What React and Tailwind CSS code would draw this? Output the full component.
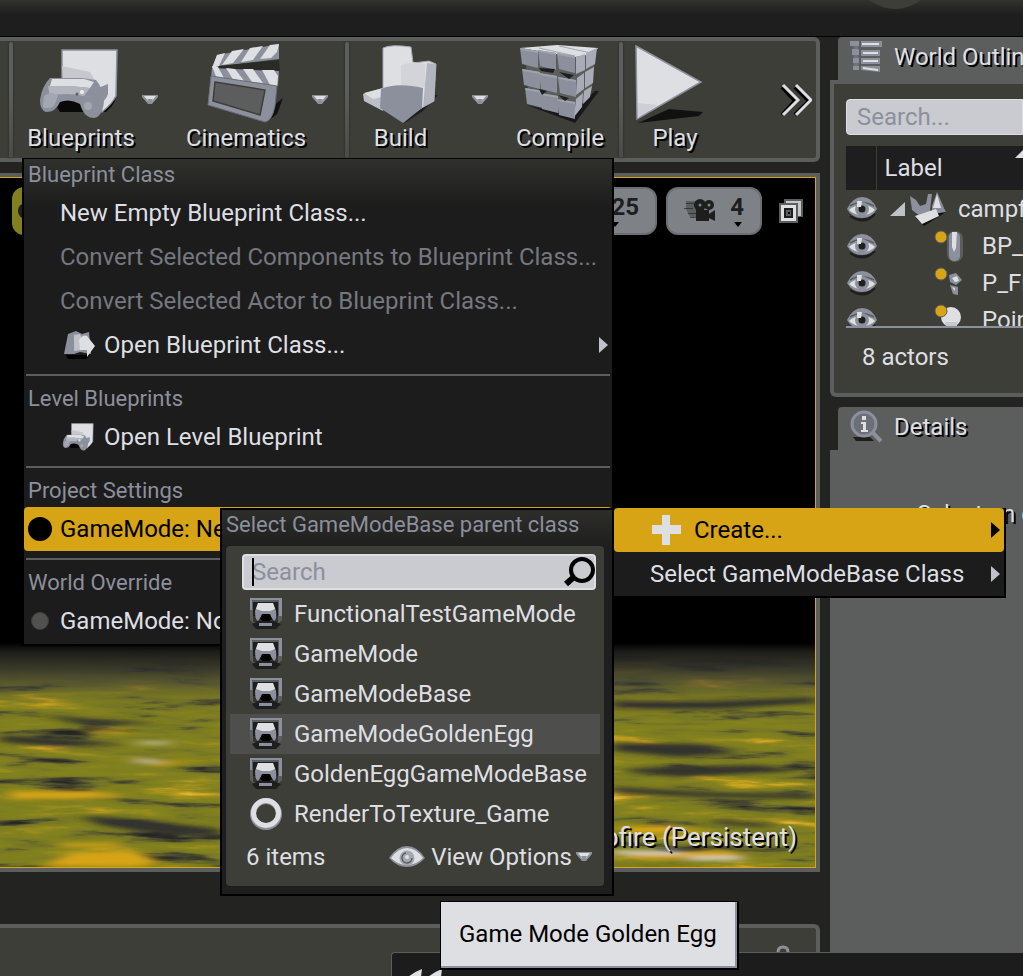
import React from "react";

const shade = "[text-shadow:2px_2px_0_#000]";

function Down({ className = "" }) {
  return (
    <svg viewBox="0 0 16 10" className={"h-[10px] w-4 shrink-0 " + className} aria-hidden="true">
      <path d="M0 0H16V2L10 9H6L0 2Z" fill="#8c909c" />
      <path d="M2 1H14L10 6H6Z" fill="#dedfe2" />
      <path d="M5 4H11L8 8Z" fill="#8c909c" />
    </svg>
  );
}

function Gamepad() {
  return (
    <g>
      <path d="M50 44L76 46Q78 56 66 66H20L14 56Z" fill="#000" opacity=".85" />
      <path d="M22 4H77L76 50Q72 58 62 66L52 54L22 40Z" fill="#dedfe2" stroke="#8c909c" strokeWidth="1.5" />
      <path d="M22 20L50 26L58 40L24 46Z" fill="#c6c8ce" />
      <path d="M58 42L68 38V48Q66 54 60 58Z" fill="#8c909c" />
      <path d="M10 32H42L56 34Q62 40 64 56Q62 71 54 72Q44 72 40 58Q30 52 20 56Q16 66 6 66Q0 64 0 54Q2 40 10 32Z" fill="#8c909c" />
      <path d="M12 33H44L54 36L50 42L30 40H10Z" fill="#dedfe2" />
      <path d="M8 40L30 40L50 42L44 50Q26 46 10 50Z" fill="#b2b5be" />
      <path d="M4 50Q12 44 18 50L14 60Q8 64 3 61Z" fill="#a4a7b1" />
      <circle cx="42" cy="46" r="2" fill="#eee" />
      <circle cx="37" cy="48" r="1.5" fill="#5c5e5d" />
      <circle cx="48" cy="60" r="4" fill="#a4a7b1" />
    </g>
  );
}

function BlueprintIcon() {
  return (
    <svg viewBox="0 0 82 78" className="h-[78px] w-[82px]" aria-hidden="true">
      <Gamepad />
    </svg>
  );
}

function CinematicsIcon() {
  return (
    <svg viewBox="0 0 78 82" className="h-[82px] w-[78px]" aria-hidden="true">
      <path d="M66 62L76 54L70 70L60 78Z" fill="#111" />
      <path d="M10 11L72 0V15L12 22L5 24Z" fill="#8c909c" />
      <path d="M12 22L72 16L73 27H12Z" fill="#2a2a26" />
      <path d="M10 11L18 9L12 22L5 24Z M25 7L37 5L26 19L15 21Z M43 4L56 2L46 16L34 18Z M63 1L72 0L70 8L64 14L53 15Z" fill="#dedfe2" />
      <path d="M5 24L72 27L71 42L4 34Z" fill="#8c909c" />
      <path d="M5 22L11 23L18 36L10 35Z M19 24L28 25L38 38L27 37Z M36 25L46 25L56 39L45 38Z M55 26L67 26L71 32L70 42L63 41Z" fill="#dedfe2" />
      <path d="M4 32L70 42L68 62Q65 77 58 78L1 61Z" fill="#8c909c" stroke="#6b6e76" />
      <path d="M8 38L58 46L53 71L6 57Z" fill="#5c5e5d" stroke="#3e3e38" strokeWidth="1.5" />
    </svg>
  );
}

function BuildIcon() {
  return (
    <svg viewBox="0 0 76 80" className="h-20 w-[76px]" aria-hidden="true">
      <path d="M60 66L75 50L70 50L40 79Z" fill="#1e1e1e" />
      <path d="M20 3Q28 -1 48 2L50 18L66 16L73 19L71 56L55 65L20 54Z" fill="#dedfe2" stroke="#a4a7b1" />
      <path d="M64 18L73 19L71 56L60 62Z" fill="#b2b5be" />
      <path d="M38 20L50 17L62 19V42H38Z" fill="#d2d4d9" />
      <path d="M0 49L20 43V66L1 56Z" fill="#bcbfc7" />
      <path d="M1 48L20 43L19 52L10 54Z" fill="#dedfe2" />
      <path d="M18 44Q34 37 60 43L59 63L40 78L17 63Z" fill="#8c909c" />
    </svg>
  );
}

function CompileIcon() {
  const cubes = [
    [1, 3, 0], [19, 5, 1], [38, 8, 2],
    [3, 24, 3], [20, 28, 4], [39, 32, 5],
    [6, 43, 6], [21, 48, 7], [38, 54, 8],
  ];
  return (
    <svg viewBox="0 0 82 80" className="h-20 w-[82px]" aria-hidden="true">
      <path d="M56 78L80 46L76 46L50 70L8 60Z" fill="#191919" />
      <path d="M6 8L77 8L72 48L52 72L10 58Z" fill="#5c5e5d" />
      <path d="M1 3L38 0L79 3L74 9L56 12Z" fill="#dedfe2" />
      <path d="M20 3L56 11M40 1L72 8" stroke="#a4a7b1" strokeWidth="1" />
      {cubes.map(([x, y, k]) => (
        <g key={k}>
          <path d={`M${x} ${y}L${x + 18} ${y + 3}L${x + 18} ${y + 20}L${x + 2} ${y + 16}Z`} fill="#8c909c" />
          <path d={`M${x} ${y}L${x + 18} ${y + 3}V${y + 5}L${x + 1} ${y + 2}Z`} fill="#a0a3ad" />
        </g>
      ))}
      <path d="M20 23L36 24L34 28L22 26Z M40 27L55 30L50 34Z M20 44L28 46L23 50Z M39 50L50 53L46 56Z" fill="#1e1e1e" />
      <path d="M57 12L66 9V25L57 29Z M67 8L78 3L76 19L67 24Z M58 33L65 28V44L57 50Z M66 27L75 22L74 38L66 43Z M57 54L64 48L63 62L55 72Z M65 46L73 41L71 52L64 59Z" fill="#a9acb6" />
    </svg>
  );
}

function PlayIcon() {
  return (
    <svg viewBox="0 0 70 80" className="h-20 w-[70px]" aria-hidden="true">
      <path d="M3 78L34 64L68 67L64 71Z" fill="#111" />
      <path d="M1 1L66 37L2 74Z" fill="#dedfe2" stroke="#8c909c" strokeWidth="1.5" />
      <path d="M3 58L22 60L3 73Z" fill="#cdcfd4" />
    </svg>
  );
}

function Eye() {
  return (
    <svg viewBox="0 0 32 26" className="h-[26px] w-8" aria-hidden="true">
      <path d="M4 20Q16 28 29 18Q18 30 4 20Z" fill="#1e1e1e" stroke="#1e1e1e" strokeWidth="2" />
      <path d="M1 13Q7 1 16 1Q26 1 31 13Q26 22 16 22Q6 22 1 13Z" fill="#8c909c" />
      <path d="M3 14Q8 9 16 9Q24 9 29 14Q24 19 16 19Q8 19 3 14Z" fill="#dedfe2" />
      <path d="M4 10Q15 3 28 10" fill="none" stroke="#5c5e5d" strokeWidth="1.5" />
      <circle cx="16" cy="13" r="7" fill="#8c909c" />
      <circle cx="16" cy="13" r="3.5" fill="#1e1e1e" />
      <path d="M11 5H16L15 11H11Z" fill="#dedfe2" />
    </svg>
  );
}

function ClassIcon() {
  return (
    <svg viewBox="0 0 32 32" className="h-8 w-8 shrink-0" aria-hidden="true">
      <path d="M0 0H32V22L29 25H3L0 22Z" fill="#5c5e5d" />
      <path d="M0 0H32V2H0Z M0 2H2V12H0Z M29 2H32V18H29Z" fill="#8c909c" />
      <path d="M3 4H28V18H3Z" fill="#1e1e1e" />
      <path d="M3 18H28V24H3Z" fill="#33332f" />
      <path d="M8 5H23L26 13Q27 22 24 23L20 17H12L8 23Q5 22 5 13Z" fill="#8c909c" />
      <path d="M8 5H23L25 11L20 13H12L6 11Z" fill="#dedfe2" />
      <path d="M10 21L12 16H20L22 21L19 23H13Z" fill="#000" />
      <path d="M2 26L8 23H24L31 26L26 31H6Z" fill="#1e1e1e" />
      <path d="M9 25H22V28H9Z" fill="#8c909c" />
    </svg>
  );
}

function Terrain() {
  return (
    <svg className="block h-56 w-full" viewBox="0 0 815 224" preserveAspectRatio="none" aria-hidden="true">
      <defs>
        <filter id="moss" x="0" y="0" width="100%" height="100%" colorInterpolationFilters="sRGB">
          <feTurbulence type="fractalNoise" baseFrequency="0.009 0.075" numOctaves="5" seed="21" />
          <feColorMatrix values="1 0 0 0 0  1 0 0 0 0  1 0 0 0 0  0 0 0 0 1" />
          <feComponentTransfer>
            <feFuncR type="table" tableValues=".12 .12 .16 .3 .46 .5 .52 .62 .85 .87 .87" />
            <feFuncG type="table" tableValues=".12 .12 .16 .3 .46 .5 .51 .56 .66 .8 .86" />
            <feFuncB type="table" tableValues=".12 .12 .15 .18 .15 .125 .125 .12 .12 .6 .86" />
          </feComponentTransfer>
        </filter>
        <filter id="soft" x="-20%" y="-80%" width="140%" height="260%">
          <feGaussianBlur stdDeviation="8 2" />
        </filter>
        <linearGradient id="depth" x1="0" y1="0" x2="0" y2="1">
          <stop offset="0" stopColor="#000" />
          <stop offset=".04" stopColor="#1a1a1a" stopOpacity=".97" />
          <stop offset=".12" stopColor="#30302c" stopOpacity=".85" />
          <stop offset=".18" stopColor="#3e3e38" stopOpacity=".6" />
          <stop offset=".24" stopColor="#3e3e38" stopOpacity=".15" />
          <stop offset=".3" stopColor="#3e3e38" stopOpacity="0" />
        </linearGradient>
      </defs>
      <rect width="815" height="224" filter="url(#moss)" />
      <rect width="815" height="224" fill="url(#depth)" />
      <g filter="url(#soft)">
        <path d="M0 92L70 96L130 102L60 104L0 99Z M80 173L120 175L220 186V194L150 190L100 182Z M40 72L160 80L90 83Z M613 100L700 101L740 110L680 114L613 108Z M640 125L760 122L800 128L680 134L620 128Z M613 144L720 150L815 151V156L700 154L613 150Z M613 58H720L815 54V60L720 66H613Z M720 176L780 182L760 184L710 180Z" fill="#30302d" />
        <path d="M10 148H90L130 153L80 156H10Z M70 210L130 207L160 218L140 224H40Z M60 200H120V204H60Z M613 184L670 182L700 188L640 192Z M613 208H730L750 216H640Z M120 114L170 119L200 118L160 123Z M90 87H130V90H90Z" fill="#d6a414" />
        <path d="M138 99H170V101H138Z M134 117H158V119H134Z M613 208H680V211H613Z M690 214H740V217H690Z" fill="#dedfe2" />
      </g>
    </svg>
  );
}

function ToolButton({ icon, label, className }) {
  return (
    <button className={"flex h-full flex-col items-center pt-1 " + className}>
      <span className="flex h-20 items-center">{icon}</span>
      <span className={"text-2xl leading-[26px] " + shade}>{label}</span>
    </button>
  );
}

function ToolDivider() {
  return <div className="h-[116px] w-1 shrink-0 rounded-full bg-gradient-to-b from-[#5c5e5d] from-40% to-[#4a4b47] shadow-[0_0_2px_#1e1e1e]" />;
}

function MenuHeading({ children }) {
  return <div className="h-8 px-1 text-[22px] leading-8 text-[#8c909c]">{children}</div>;
}

function Divider() {
  return <div role="separator" className="mx-0.5 my-[7px] h-0.5 bg-[#5c5e5d]" />;
}

function MenuItem({ icon, children, disabled, active, dot }) {
  return (
    <button
      role="menuitem"
      disabled={disabled}
      className={
        "flex h-11 w-full items-center whitespace-nowrap text-left text-2xl " +
        (active ? "rounded bg-[#d6a414] text-black " : disabled ? "text-[#75787f] " : "text-[#dedfe2] ") +
        (dot ? "gap-2 pl-1" : icon ? "gap-2 pl-[38px]" : "pl-9")
      }
    >
      {icon}
      {children}
    </button>
  );
}

function Arrow({ className }) {
  return (
    <svg viewBox="0 0 9 16" className={"h-4 w-[9px] shrink-0 " + className} aria-hidden="true">
      <path d="M0 0L9 8L0 16Z" fill="currentColor" />
    </svg>
  );
}

function ActorIcon({ kind }) {
  return (
    <svg viewBox="0 0 32 32" className="h-8 w-8" aria-hidden="true">
      {kind === "bp" && (
        <g>
          <rect x="13" y="1" width="16" height="31" rx="8" fill="#5c5e5d" />
          <rect x="15" y="2" width="11" height="29" rx="5" fill="#8c909c" />
          <path d="M18 2H23L22 18L20 22L18 17Z" fill="#dedfe2" />
        </g>
      )}
      {kind === "fx" && (
        <g fill="#8c909c">
          <path d="M15 8L22 6L28 13L22 18L16 15Z M16 18L24 20L24 28L19 27Z" />
          <path d="M18 11L23 9L25 14L21 15Z M18 20L21 21L21 24Z" fill="#dedfe2" />
        </g>
      )}
      {kind === "light" && (
        <g>
          <circle cx="17" cy="13" r="10" fill="#dedfe2" />
          <path d="M11 18H23V25H13Z" fill="#c6c8ce" />
        </g>
      )}
      <circle cx="7" cy="7" r="6" fill="#d6a414" stroke="#5c5e5d" />
    </svg>
  );
}

function Outliner() {
  const rows = [
    ["BP_Campfire", "bp"],
    ["P_Fire", "fx"],
    ["PointLight", "light"],
  ];
  return (
    <section>
      <div className="ml-2 flex h-[43px] items-center gap-3 overflow-hidden rounded-tl bg-[#5c5e5d] pb-1 pl-3">
        <svg viewBox="0 0 32 34" className="h-[34px] w-8 shrink-0" aria-hidden="true">
          <path d="M6 3V30" stroke="#6f727a" strokeWidth="5" fill="none" />
          <path d="M11 1H32V7H11Z M11 10H30V16H11Z M11 18H30V24H11Z M11 26H30V32L11 30Z" fill="#8c909c" />
          <path d="M12 3H29V5H12Z M13 12H28V14H13Z M13 20H28V22H13Z M13 27L28 29V31L13 29Z" fill="#dedfe2" />
          <path d="M0 1H9V6H0Z M2 9H9V15H2Z M3 18H9V23H3Z M3 26H9V30H3Z" fill="#8c909c" />
        </svg>
        <h2 className={"whitespace-nowrap text-2xl " + shade}>World Outliner</h2>
      </div>
      <div className="rounded-bl-md border-b-4 border-l-4 border-t-4 border-[#5c5e5d] bg-[#3e3e38] pl-3 pt-[15px]">
        <input
          aria-label="Search actors"
          placeholder="Search..."
          className="block h-9 w-full rounded-l border border-[#dedfe2] bg-[#c9cbd0] pl-[10px] text-2xl text-black placeholder:text-[#8c909c]"
        />
        <div className="mt-[11px] h-[182px] overflow-hidden border-b-2 border-[#8c909c]">
          <table className="w-full table-fixed border-collapse text-left text-2xl">
            <thead>
              <tr className="h-11 bg-[#1e1e1e]">
                <th className="w-[30px] border-r border-[#3e3e38]" aria-label="Visibility" />
                <th className="relative whitespace-nowrap p-0 pl-2 font-normal">
                  Label
                  <svg viewBox="0 0 8 8" className="absolute right-0 top-1 h-2 w-2" aria-hidden="true">
                    <path d="M0 8L8 0V8Z" fill="#dedfe2" />
                  </svg>
                </th>
              </tr>
            </thead>
            <tbody>
              <tr className="h-[37px]">
                <td className="p-0"><Eye /></td>
                <td className="overflow-hidden p-0">
                  <span className="flex items-center gap-1 whitespace-nowrap pl-[14px]">
                    <svg viewBox="0 0 16 16" className="h-4 w-4 shrink-0" aria-hidden="true">
                      <path d="M0 15L15 1V15Z" fill="#bfc2c9" />
                    </svg>
                    <svg viewBox="0 0 36 34" className="h-[34px] w-9 shrink-0" aria-hidden="true">
                      <path d="M6 26L34 16L36 20L14 34Z" fill="#111" />
                      <path d="M0 4L6 8L10 14L16 12L18 2H22L20 18L24 22L10 24L2 18Z" fill="#8c909c" />
                      <path d="M27 0L34 16L36 20L22 22L22 14Z" fill="#8c909c" />
                      <path d="M27 2L31 16H23Z M5 24L26 17L29 24L12 32Z" fill="#dedfe2" />
                    </svg>
                    <span className="pl-2">campfire</span>
                  </span>
                </td>
              </tr>
              {rows.map(([name, kind]) => (
                <tr key={name} className="h-[37px]">
                  <td className="p-0"><Eye /></td>
                  <td className="overflow-hidden p-0">
                    <span className="flex h-[37px] items-center gap-4 whitespace-nowrap pl-[58px]">
                      <span className="shrink-0"><ActorIcon kind={kind} /></span>
                      {name}
                    </span>
                  </td>
                </tr>
              ))}
            </tbody>
          </table>
        </div>
        <p className="pb-5 pl-4 pt-[13px] text-2xl leading-8">8 actors</p>
      </div>
    </section>
  );
}

function Details() {
  return (
    <section className="flex flex-1 flex-col">
      <div className="ml-2 flex h-[43px] items-center gap-3 rounded-tl bg-[#5c5e5d] pb-1 pl-3">
        <svg viewBox="0 0 32 34" className="h-[34px] w-8" aria-hidden="true">
          <path d="M3 27H20L24 31H6Z" fill="#1e1e1e" />
          <path d="M22 22L31 31" stroke="#8c909c" strokeWidth="4" />
          <circle cx="14" cy="14" r="12" fill="#6c6f76" stroke="#8c909c" strokeWidth="3" />
          <path d="M12 6H16V10H12Z M11 12H16V20H18V22H11V20H13V14H11Z" fill="#dedfe2" />
        </svg>
        <h2 className={"text-2xl " + shade}>Details</h2>
      </div>
      <div className="flex-1 overflow-hidden bg-[#5c5e5d] pl-[87px] pt-12">
        <p className={"whitespace-nowrap text-2xl leading-8 " + shade}>Select an object to view details.</p>
      </div>
    </section>
  );
}

function ClassPicker() {
  const items = ["FunctionalTestGameMode", "GameMode", "GameModeBase", "GameModeGoldenEgg", "GoldenEggGameModeBase"];
  return (
    <div className="absolute left-[220px] top-[508px] w-[394px] border-2 border-black bg-[#1e1e1e] bg-gradient-to-b from-[#2d2d2a] to-[#1e1e1e] to-10% px-1 pb-2">
      <div className="h-9 text-[22px] leading-[30px] text-[#8c909c]">Select GameModeBase parent class</div>
      <div className="mr-1 rounded bg-[#3e3e38] px-1 pb-[6px] pt-2">
        <div className="relative ml-3 mr-1">
          <input
            aria-label="Search classes"
            placeholder="Search"
            className="block h-9 w-full rounded border-2 border-[#dedfe2] bg-[#c9cbd0] pl-2 text-2xl text-black placeholder:text-[#8c909c]"
          />
          <span className="absolute left-[10px] top-1 h-7 w-0.5 bg-black" />
          <svg viewBox="0 0 32 32" className="absolute right-0 top-0.5 h-8 w-8" aria-hidden="true">
            <path d="M2 28L11 20" stroke="#000" strokeWidth="6" />
            <circle cx="18" cy="14" r="11" fill="#c9cbd0" stroke="#000" strokeWidth="4" />
          </svg>
        </div>
        <ul className="mt-1 text-2xl">
          {items.map((name) => (
            <li key={name}>
              <button
                className={
                  "flex h-10 w-full items-center gap-3 pl-5 " + (name === "GameModeGoldenEgg" ? "bg-[#4e4f4c]" : "")
                }
              >
                <ClassIcon />
                {name}
              </button>
            </li>
          ))}
          <li>
            <button className="flex h-10 w-full items-center gap-3 pl-5">
              <svg viewBox="0 0 32 32" className="h-8 w-8" aria-hidden="true">
                <circle cx="16" cy="16" r="13" fill="none" stroke="#8c909c" strokeWidth="6" />
                <circle cx="16" cy="15" r="12.5" fill="none" stroke="#dedfe2" strokeWidth="5" />
              </svg>
              RenderToTexture_Game
            </button>
          </li>
        </ul>
        <div className="flex h-[46px] items-center justify-between pl-4 pr-2 text-2xl">
          <span>6 items</span>
          <button className="flex items-center gap-1">
            <svg viewBox="0 0 36 22" className="mr-0.5 h-[22px] w-9" aria-hidden="true">
              <path d="M0 12Q8 0 18 0Q28 0 36 12Q28 21 18 21Q8 21 0 12Z" fill="#8c909c" />
              <path d="M2 12Q9 2 18 2Q27 2 34 12Q27 19 18 19Q9 19 2 12Z" fill="#dedfe2" />
              <circle cx="18" cy="12" r="7.5" fill="#a4a7b1" />
              <path d="M17 7A5 5 0 1 0 23 12" fill="none" stroke="#5c5e5d" strokeWidth="1.5" />
              <circle cx="18" cy="11" r="2" fill="#dedfe2" />
            </svg>
            View Options
            <Down />
          </button>
        </div>
      </div>
    </div>
  );
}

function BlueprintMenu() {
  return (
    <div
      role="menu"
      className="absolute left-[22px] top-[158px] w-[592px] border-2 border-t border-black bg-[#1c1c1c] bg-gradient-to-b from-[#30302d] to-[#1c1c1c] to-10% pb-px"
    >
      <MenuHeading>Blueprint Class</MenuHeading>
      <MenuItem>New Empty Blueprint Class...</MenuItem>
      <MenuItem disabled>Convert Selected Components to Blueprint Class...</MenuItem>
      <MenuItem disabled>Convert Selected Actor to Blueprint Class...</MenuItem>
      <MenuItem
        icon={
          <svg viewBox="0 0 34 30" className="h-[30px] w-[34px]" aria-hidden="true">
            <path d="M4 25H28L24 29H6Z" fill="#000" />
            <path d="M6 4L14 1L20 4L27 2L29 24L18 22L12 24L2 24Z" fill="#8c909c" />
            <path d="M12 5L18 4L20 8V20L12 21Z" fill="#bfc2c9" />
            <path d="M17 10Q21 4 25 6L33 16L25 27V20H18Z" fill="#dedfe2" />
          </svg>
        }
      >
        Open Blueprint Class...
        <Arrow className="ml-auto mr-1 text-[#bfc2c9]" />
      </MenuItem>
      <Divider />
      <MenuHeading>Level Blueprints</MenuHeading>
      <MenuItem
        icon={
          <svg viewBox="0 0 82 76" className="h-[30px] w-[34px]" aria-hidden="true">
            <Gamepad />
          </svg>
        }
      >
        Open Level Blueprint
      </MenuItem>
      <Divider />
      <MenuHeading>Project Settings</MenuHeading>
      <MenuItem active dot icon={<span className="h-6 w-6 rounded-full bg-black" />}>
        GameMode: New
      </MenuItem>
      <Divider />
      <MenuHeading>World Override</MenuHeading>
      <MenuItem
        dot
        icon={
          <span className="flex h-6 w-6 items-center justify-center">
            <span className="h-[18px] w-[18px] rounded-full border border-[#3e3e38] bg-[#50524f]" />
          </span>
        }
      >
        GameMode: Not
      </MenuItem>
    </div>
  );
}

function ViewportBar() {
  const pill = "flex h-12 items-center rounded-xl border-2 border-[#6c6f72] bg-[#7e8186] text-2xl font-bold text-[#1e1e1e]";
  return (
    <div className="flex items-center gap-[9px] py-[9px] pl-3 pr-3">
      <button aria-label="Viewport options" className="flex h-12 w-12 items-center rounded-xl bg-[#808020] pl-[6px]">
        <svg viewBox="0 0 16 16" className="h-4 w-4" aria-hidden="true"><circle cx="8" cy="8" r="8" fill="#1e1e1e" /></svg>
      </button>
      <button className={pill + " relative ml-auto w-24 justify-end pb-2 pr-4"}>
        0.25
        <svg viewBox="0 0 8 5" className="absolute bottom-1.5 right-9 h-[5px] w-2" aria-hidden="true"><path d="M0 0H8L4 5Z" /></svg>
      </button>
      <button className={pill + " relative w-24 justify-between pb-2 pl-4 pr-4"}>
        <svg viewBox="0 0 32 24" className="mt-2 h-6 w-8" aria-hidden="true">
          <g fill="#1e1e1e">
            <path d="M2 2H14V18H6L2 10Z" opacity=".35" />
            <circle cx="16" cy="6" r="6" /><circle cx="25" cy="6" r="5" />
            <path d="M12 11H25V15L31 11V22L25 19V22H12Z" />
            <path d="M2 4H10V5H2Z M0 9H9V10H0Z M4 14H12V15H4Z M6 18H12V19H6Z" opacity=".6" />
          </g>
          <circle cx="16" cy="6" r="1.5" fill="#7e8186" /><circle cx="25" cy="6" r="1.5" fill="#7e8186" />
        </svg>
        4
        <svg viewBox="0 0 8 5" className="absolute bottom-1.5 right-[18px] h-[5px] w-2" aria-hidden="true"><path d="M0 0H8L4 5Z" /></svg>
      </button>
      <button aria-label="Restore viewport" className="ml-2">
        <svg viewBox="0 0 24 24" className="h-6 w-6" aria-hidden="true">
          <path d="M5 0H24V18H5Z" fill="#5c5e5d" />
          <path d="M7 2H22V17H18V5H7Z" fill="#c6c8ce" />
          <path d="M0 4H19V24H0Z" fill="#5c5e5d" />
          <path d="M2 6H17V22H2Z" fill="#dedfe2" />
          <path d="M5 9H14V19H5Z" fill="#1e1e1e" />
          <path d="M7 11H12V17H7Z" fill="#5c5e5d" />
          <path d="M9 13H11V15H9Z" fill="#000" />
        </svg>
      </button>
    </div>
  );
}

export default function App() {
  return (
    <div className="relative flex min-h-screen flex-col overflow-hidden bg-[#232321] font-['Roboto',sans-serif] text-[#dedfe2]">
      <header className="relative h-[37px] overflow-hidden border-b border-black bg-[#1e1e1e] bg-gradient-to-b from-[#32322f] to-[#1e1e1e] to-40%">
        <svg viewBox="0 0 64 10" className="absolute right-24 top-0 h-[10px] w-16" aria-hidden="true">
          <path d="M6 0Q32 18 58 0Z" fill="#3e3e38" />
        </svg>
      </header>

      <div className="flex flex-1 gap-[10px]">
        <main className="flex min-w-0 flex-1 flex-col">
          <div className="flex h-[125px] items-center rounded-r-md border-b-4 border-r-4 border-t-4 border-[#5c5e5d] bg-[#3e3e38] pl-[9px]">
            <ToolDivider />
            <ToolButton icon={<BlueprintIcon />} label="Blueprints" className="ml-[7px] w-[122px]" />
            <Down />
            <ToolButton icon={<CinematicsIcon />} label="Cinematics" className="ml-[22px] w-[132px]" />
            <Down />
            <div className="ml-[17px]"><ToolDivider /></div>
            <ToolButton icon={<BuildIcon />} label="Build" className="w-[103px]" />
            <Down className="ml-5" />
            <ToolButton icon={<CompileIcon />} label="Compile" className="ml-4 w-[112px]" />
            <div className="ml-[3px]"><ToolDivider /></div>
            <button className="ml-3 flex h-full w-20 flex-col items-center pt-1">
              <span className="flex h-20 items-center self-start"><PlayIcon /></span>
              <span className={"text-2xl leading-[26px] " + shade}>Play</span>
            </button>
            <button aria-label="More tools" className="ml-auto mr-1">
              <svg viewBox="0 0 32 34" className="h-[34px] w-8" fill="none" aria-hidden="true">
                <path d="M2 4L15 18L2 32M15 4L29 18L15 32" stroke="#000" strokeWidth="4" />
                <path d="M3 2L18 17L3 32M16 2L31 17L16 32" stroke="#dedfe2" strokeWidth="3" />
              </svg>
            </button>
          </div>

          <div className="mt-[11px] flex flex-1 flex-col border-b-4 border-r-4 border-t-4 border-[#5c5e5d]">
            <div className="relative flex flex-1 flex-col justify-between border-b border-r border-t border-[#d6a414] bg-black">
              <ViewportBar />
              <Terrain />
              <p className={"absolute bottom-3 right-[18px] text-[26px] leading-9 " + shade}>campfire (Persistent)</p>
            </div>
          </div>

          <div className="mt-[52px] h-[52px] rounded-tr-md border-r-4 border-t-4 border-[#5c5e5d] bg-[#3e3e38]">
            <svg viewBox="0 0 14 12" className="ml-auto mr-[26px] mt-[17px] h-3 w-[14px]" fill="none" aria-hidden="true">
              <path d="M2 12V7Q2 2 7 2Q12 2 12 7V12" stroke="#8c909c" strokeWidth="3" />
            </svg>
          </div>
        </main>

        <aside className="flex w-[193px] shrink-0 flex-col gap-[10px] overflow-hidden">
          <Outliner />
          <Details />
        </aside>
      </div>

      <div className="absolute bottom-0 left-[391px] right-0 h-6 rounded-tl border-l border-t border-[#5c5e5d] bg-[#1c1c1c]">
        <svg viewBox="0 0 36 8" className="ml-4 mt-4 h-2 w-9" aria-hidden="true">
          <path d="M0 8Q6 3 14 0L13 8Z M20 8Q26 3 34 0L33 8Z" fill="#dedfe2" />
        </svg>
      </div>

      <BlueprintMenu />
      <div role="menu" className="absolute left-[613px] top-[508px] w-[393px] border-b-2 border-l border-r-2 border-black bg-[#1c1c1c] text-2xl">
        <button role="menuitem" className="flex h-11 w-full items-center rounded bg-[#d6a414] pl-9 text-black">
          <svg viewBox="0 0 32 32" className="mr-3 h-8 w-8" aria-hidden="true">
            <path d="M12 1H20V11H31V20H20V31H12V20H2V11H12Z" fill="#dedfe2" />
          </svg>
          Create...
          <Arrow className="ml-auto mr-1" />
        </button>
        <button role="menuitem" className="flex h-11 w-full items-center whitespace-nowrap pl-9">
          Select GameModeBase Class
          <Arrow className="ml-auto mr-1 text-[#bfc2c9]" />
        </button>
      </div>
      <ClassPicker />
      <div
        role="tooltip"
        className="absolute left-[440px] top-[901px] border-b-2 border-l border-r-2 border-t border-black"
      >
        <div className="border-b-2 border-r-2 border-[#8c909c] bg-[#dedfe2] px-[18px] py-4 text-2xl leading-8 text-black">
          Game Mode Golden Egg
        </div>
      </div>
    </div>
  );
}
